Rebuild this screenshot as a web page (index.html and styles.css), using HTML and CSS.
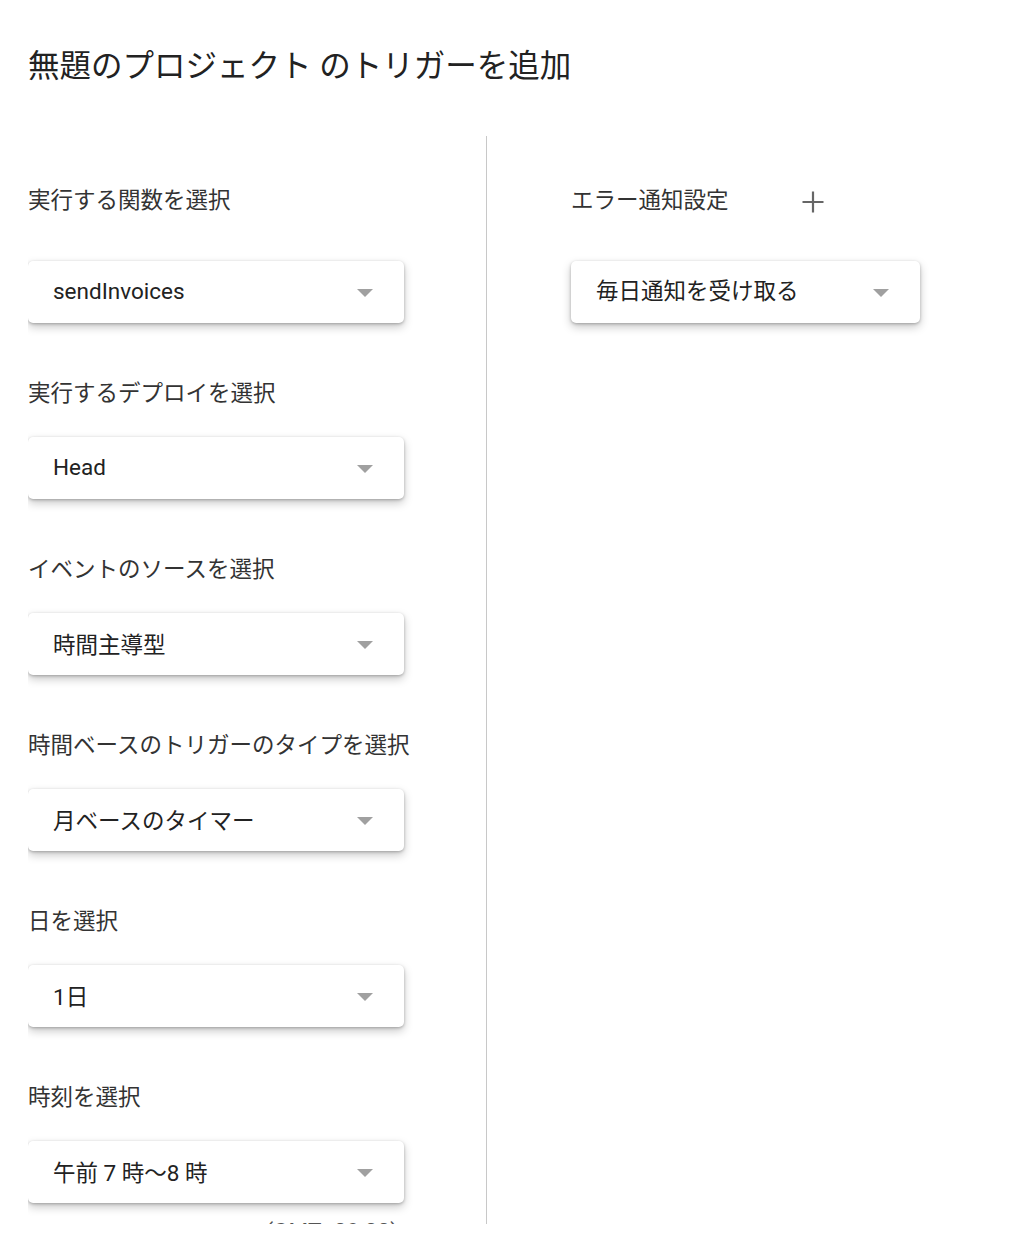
FILE: index.html
```html
<!DOCTYPE html>
<html lang="ja">
<head>
    <meta charset="UTF-8">
    <title>トリガーを追加</title>
    <link rel="stylesheet" href="styles.css">
</head>
<body>

<div class="dialog">
    <h1 class="dialog-title">無題のプロジェクト のトリガーを追加</h1>

    <div class="columns">
        <div class="col col-left">
            <div class="field">
                <div class="label label-first">実行する関数を選択</div>
                <div class="select"><span>sendInvoices</span><i class="caret"></i></div>
            </div>
            <div class="field">
                <div class="label">実行するデプロイを選択</div>
                <div class="select"><span>Head</span><i class="caret"></i></div>
            </div>
            <div class="field">
                <div class="label">イベントのソースを選択</div>
                <div class="select"><span>時間主導型</span><i class="caret"></i></div>
            </div>
            <div class="field">
                <div class="label">時間ベースのトリガーのタイプを選択</div>
                <div class="select"><span>月ベースのタイマー</span><i class="caret"></i></div>
            </div>
            <div class="field">
                <div class="label">日を選択</div>
                <div class="select"><span>1日</span><i class="caret"></i></div>
            </div>
            <div class="field">
                <div class="label">時刻を選択</div>
                <div class="select"><span>午前 7 時～8 時</span><i class="caret"></i></div>
                <div class="hint">(GMT+09:00)</div>
            </div>
        </div>

        <div class="col col-right">
            <div class="field">
                <div class="label label-first label-row">
                    エラー通知設定
                    <!-- 追加ボタン -->
                    <svg class="plus" width="24" height="24" viewBox="0 0 24 24">
                        <path d="M12 1.5v21M1.5 12h21" stroke="#666" stroke-width="2.2" fill="none"/>
                    </svg>
                </div>
                <div class="select select-right"><span class="cjk">毎日通知を受け取る</span><i class="caret"></i></div>
            </div>
        </div>
    </div>
</div>

</body>
</html>
```

FILE: styles.css
```css
* {
    margin: 0;
    padding: 0;
    box-sizing: border-box;
}
body {
    background: #fff;
    font-family: "Roboto", "Noto Sans CJK JP", sans-serif;
    color: #333;
}
.dialog {
    padding: 42px 0 0 28px;
}
.dialog-title {
    font-size: 31.5px;
    font-weight: normal;
    line-height: 50px;
    color: #222;
    height: 94px;
}
.columns {
    display: flex;
    height: 1088px;
    overflow: hidden;
}
.col {
    padding-top: 49px;
}
.col-left {
    width: 459px;
    padding-right: 83px;
    border-right: 1px solid #c8c8c8;
}
.col-right {
    padding-left: 84px;
}
.field {
    margin-bottom: 55px;
}
.label {
    font-size: 22.5px;
    line-height: 30px;
    margin-bottom: 29px;
    white-space: nowrap;
    color: #333;
}
.label-first {
    margin-bottom: 46px;
}
.label-row {
    display: flex;
    align-items: center;
}
.plus {
    margin-left: 72px;
    margin-top: 3px;
}
.select {
    width: 376px;
    height: 62px;
    display: flex;
    align-items: center;
    justify-content: space-between;
    padding: 0 31px 3px 25px;
    background: #fff;
    border-radius: 5px;
    box-shadow: 0 1px 3px rgba(0,0,0,.25), 0 4px 10px rgba(0,0,0,.22);
    font-size: 22.5px;
    color: #222;
}
.select .cjk {
    margin-top: -3px;
}
.select-right {
    width: 349px;
}
.caret {
    width: 0;
    height: 0;
    border-left: 8px solid transparent;
    border-right: 8px solid transparent;
    border-top: 8px solid #a0a0a0;
    margin-top: 4px;
}
.hint {
    width: 370px;
    text-align: right;
    font-size: 22.5px;
    line-height: 28px;
    margin-top: 14px;
    color: #555;
}
```
